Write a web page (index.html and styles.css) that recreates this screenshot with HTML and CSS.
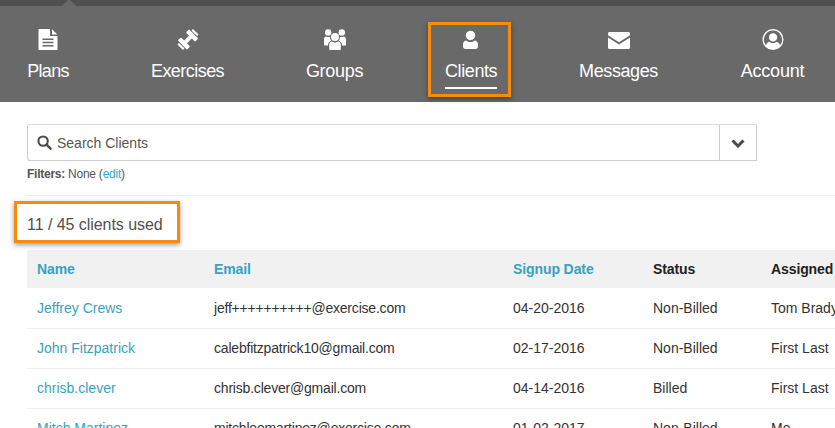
FILE: index.html
```html
<!DOCTYPE html>
<html lang="en">
<head>
<meta charset="utf-8">
<title>Clients</title>
<link rel="stylesheet" href="styles.css">
</head>
<body>
<header class="topbar"><svg class="notch" width="14" height="6" viewBox="0 0 14 6"><path d="M0 6L6 0H8L14 6Z"/></svg></header>
<nav class="nav">
  <a class="nav-item nav-plans">
    <svg class="icon" viewBox="0 0 22 21"><path fill-rule="evenodd" d="M1.500 1C1.500.4 1.900 0 2.500 0H13V7H20.500V20C20.500 20.600 20.100 21 19.500 21H2.500C1.900 21 1.500 20.600 1.500 20ZM5.500 9.500V11H16.500V9.500ZM5.500 12.700V14.200H16.500V12.700ZM5.500 15.900V17.400H16.500V15.900Z"/><path d="M15 .3L20.300 5.500H15Z"/></svg>
    <span>Plans</span>
  </a>
  <a class="nav-item nav-exercises">
    <svg class="icon" viewBox="0 0 22 21"><g transform="rotate(-45 11 10.500)"><rect x="7" y="8.500" width="8" height="4"/><rect x="3" y="4" width="4.500" height="13" rx="1"/><rect x="14.500" y="4" width="4.500" height="13" rx="1"/><rect x="0" y="6.500" width="2.200" height="8" rx=".8"/><rect x="19.800" y="6.500" width="2.200" height="8" rx=".8"/></g></svg>
    <span>Exercises</span>
  </a>
  <a class="nav-item nav-groups">
    <svg class="icon" viewBox="0 0 22 21"><circle cx="11" cy="8" r="4"/><circle cx="4.200" cy="3.400" r="3.200"/><circle cx="17.800" cy="3.400" r="3.200"/><path d="M5.200 20V16C5.200 13.500 6.500 12.500 8 12.500 9 13.300 10 13.500 11 13.500 12 13.500 13 13.300 14 12.500 15.500 12.500 16.800 13.500 16.800 16V20C16.800 20.600 16.400 21 15.800 21H6.200C5.600 21 5.200 20.600 5.200 20Z"/><path d="M4 16.500H1C.4 16.500 0 16 0 15.400V10.500C0 8.500 1 7.500 2.500 7.500 3.500 8.200 5 8.200 6 7.800 6 9.500 6.300 10.500 7.300 11.700 5 12.300 4 14 4 16.500Z"/><path d="M18 16.500H21C21.600 16.500 22 16 22 15.400V10.500C22 8.500 21 7.500 19.500 7.500 18.500 8.200 17 8.200 16 7.800 16 9.500 15.700 10.500 14.700 11.700 17 12.300 18 14 18 16.500Z"/></svg>
    <span>Groups</span>
  </a>
  <a class="nav-item nav-clients">
    <svg class="icon" viewBox="0 0 22 21"><circle cx="10.500" cy="6.500" r="4.700"/><path d="M3 17.500V15.500C3 13 4.500 11.700 6.300 11.500 7.500 12.500 9 13 10.500 13 12 13 13.500 12.500 14.700 11.500 16.500 11.700 18 13 18 15.500V17.500C18 19 17 20 15.500 20H5.500C4 20 3 19 3 17.500Z"/></svg>
    <span class="nav-label-active">Clients</span>
  </a>
  <a class="nav-item nav-messages">
    <svg class="icon" viewBox="0 0 22 21"><path d="M1.500 3H20.500C21.300 3 22 3.700 22 4.500V6.200L11 13.300 0 6.200V4.500C0 3.700.7 3 1.500 3Z"/><path d="M0 8.400L11 15.500 22 8.400V18.500C22 19.300 21.300 20 20.500 20H1.500C.7 20 0 19.300 0 18.500Z"/></svg>
    <span>Messages</span>
  </a>
  <a class="nav-item nav-account">
    <svg class="icon" viewBox="0 0 22 21"><path fill-rule="evenodd" d="M11 0A10.500 10.500 0 1 0 11 21 10.500 10.500 0 1 0 11 0ZM11 1.500A9 9 0 0 1 18 16.200C17.500 14.300 16.300 13.200 14.800 12.700 13.800 13.500 12.500 14 11 14 9.500 14 8.200 13.500 7.200 12.700 5.700 13.200 4.500 14.300 4 16.200A9 9 0 0 1 11 1.500ZM11 4.200A4.200 4.200 0 1 0 11 12.600 4.200 4.200 0 1 0 11 4.200Z"/></svg>
    <span>Account</span>
  </a>
  <div class="callout callout-nav"></div>
</nav>
<main class="content">
  <div class="search">
    <div class="search-field">
      <svg class="search-icon" viewBox="0 0 16 16"><circle cx="6.500" cy="6.500" r="5" fill="none" stroke="#4a4a4a" stroke-width="2.200"/><path d="M10.200 10.200L14.500 14.500" stroke="#4a4a4a" stroke-width="2.600" stroke-linecap="round"/></svg>
      <span>Search Clients</span>
    </div>
    <div class="search-toggle"><svg width="14" height="10" viewBox="0 0 14 10"><path d="M1.500 2.500L7 8 12.500 2.500" fill="none" stroke="#4a4a4a" stroke-width="3"/></svg></div>
  </div>
  <p class="filters"><b>Filters:</b> None (<a class="link">edit</a>)</p>
  <hr class="rule">
  <div class="usage">
    <span>11 / 45 clients used</span>
    <div class="callout callout-usage"></div>
  </div>
  <table class="clients">
    <colgroup><col class="c-name"><col class="c-email"><col class="c-date"><col class="c-status"><col class="c-assigned"></colgroup>
    <thead>
      <tr><th class="link">Name</th><th class="link">Email</th><th class="link">Signup Date</th><th>Status</th><th>Assigned To</th></tr>
    </thead>
    <tbody>
      <tr><td class="link">Jeffrey Crews</td><td class="email">jeff++++++++++@exercise.com</td><td>04-20-2016</td><td>Non-Billed</td><td>Tom Brady</td></tr>
      <tr><td class="link">John Fitzpatrick</td><td class="email">calebfitzpatrick10@gmail.com</td><td>02-17-2016</td><td>Non-Billed</td><td>First Last</td></tr>
      <tr><td class="link">chrisb.clever</td><td class="email">chrisb.clever@gmail.com</td><td>04-14-2016</td><td>Billed</td><td>First Last</td></tr>
      <tr><td class="link">Mitch Martinez</td><td class="email">mitchleemartinez@exercise.com</td><td>01-02-2017</td><td>Non-Billed</td><td>Me</td></tr>
    </tbody>
  </table>
</main>
</body>
</html>
```
FILE: styles.css
```css
* { box-sizing: border-box; }
html, body { margin: 0; height: 100%; overflow: hidden; }
body { background: #fff; color: #333; font-family: "Liberation Sans", Arial, sans-serif; font-size: 14px; }
.topbar { height: 6px; background: #505050; padding-left: 62px; display: flex; }
.notch { fill: #696969; display: block; }
.nav { position: relative; height: 96px; background: #696969; display: flex; gap: 82px; padding-left: 27px; color: #fff; }
.nav-item { display: flex; flex-direction: column; align-items: center; padding-top: 23px; font-size: 18px; letter-spacing: -0.5px; white-space: nowrap; }
.nav-plans { width: 42px; letter-spacing: -0.7px; }
.nav-exercises { width: 73px; letter-spacing: -0.55px; }
.nav-groups { width: 57px; letter-spacing: -0.3px; }
.nav-clients { width: 52px; letter-spacing: -0.4px; }
.nav-messages { width: 79px; letter-spacing: -0.4px; }
.nav-account { width: 65px; letter-spacing: -0.2px; }
.icon { width: 22px; height: 21px; fill: #fff; display: block; flex: none; margin-bottom: 11px; }
.nav-label-active { display: block; width: 100%; text-align: center; padding-bottom: 5px; border-bottom: 2px solid #fff; }
.callout { position: absolute; border: 3px solid #f78b0c; box-shadow: 0 2px 5px rgba(0,0,0,.4); pointer-events: none; }
.callout-nav { left: 428px; top: 16px; width: 83px; height: 75px; }
.callout-usage { left: -13px; top: 5px; width: 166px; height: 42px; }
.content { padding: 22px 0 0 27px; }
.search { display: flex; width: 730px; height: 37px; border: 1px solid #ccc; border-top-color: #ddd; border-radius: 3px 0 0 3px; }
.search-field { flex: 1; display: flex; align-items: center; gap: 5px; padding-left: 9px; color: #555; font-size: 14px; border-right: 1px solid #ccc; }
.search-icon { width: 15px; height: 15px; }
.search-toggle { width: 36px; display: flex; align-items: center; justify-content: center; }
.filters { margin: 6px 0 0; font-size: 12px; line-height: 14px; color: #555; letter-spacing: -0.25px; }
.link { color: #36a3c2; }
.rule { margin: 14px 0 0; border: 0; height: 1px; background: #eee; }
.usage { position: relative; height: 54px; padding-top: 20px; font-size: 16px; line-height: 18px; color: #4f4f4f; letter-spacing: -0.05px; }
.clients { width: 884px; table-layout: fixed; border-collapse: collapse; font-size: 14px; color: #333; }
.c-name { width: 177px; }
.c-email { width: 299px; }
.c-date { width: 140px; }
.c-status { width: 118px; }
.c-assigned { width: 150px; }
.clients th { height: 38px; padding: 0 10px; text-align: left; background: #f1f1f1; font-weight: bold; white-space: nowrap; letter-spacing: -0.1px; }
.clients th:not(.link) { color: #222; }
.clients td { height: 40px; padding: 0 10px; border-bottom: 1px solid #eee; white-space: nowrap; }
.clients .email { letter-spacing: -0.2px; }
```
